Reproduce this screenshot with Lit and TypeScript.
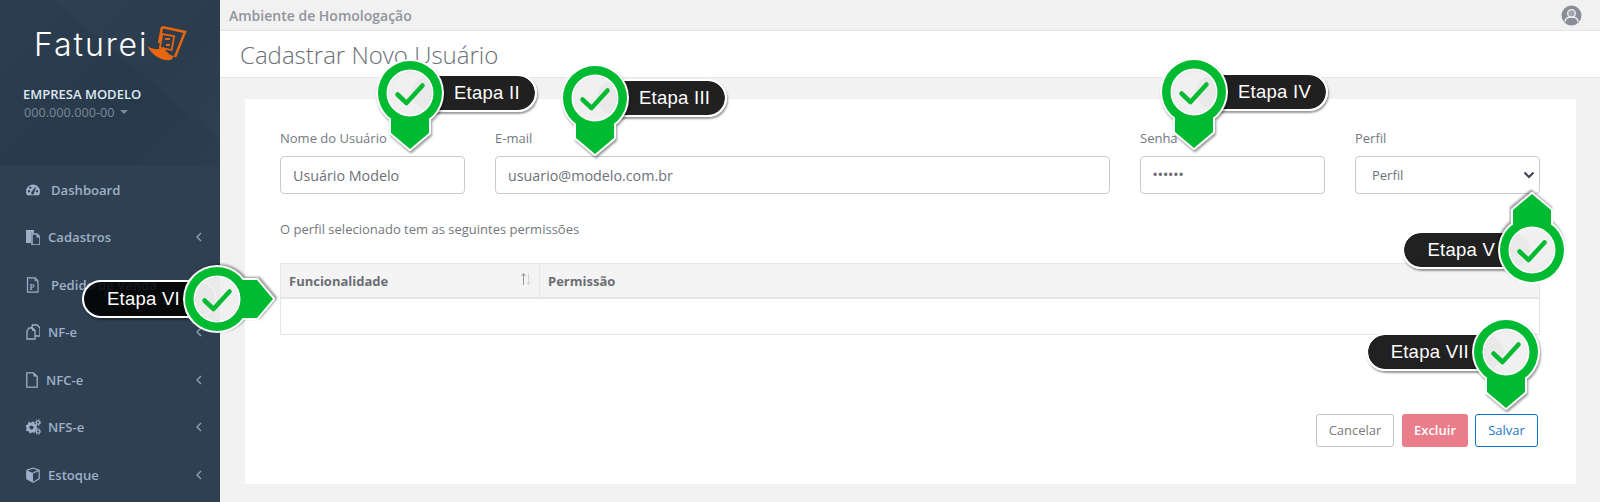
import { LitElement, html, css, svg } from 'lit';
import { customElement, property } from 'lit/decorators.js';

const chevron = html`<svg class="chev" width="6" height="10" viewBox="0 0 6 10"><path d="M5 1 1 5l4 4" fill="none" stroke="currentColor" stroke-width="1.3"/></svg>`;

const icons: Record<string, unknown> = {
  dashboard: svg`<path fill-rule="evenodd" d="M7 2.500a7 7 0 0 0-7 7c0 1.500.4 2.700 1.100 3.800h11.800A7 7 0 0 0 14 9.500a7 7 0 0 0-7-7zM3 10.500a1.200 1.200 0 1 1 0-2.400 1.200 1.200 0 0 1 0 2.400zM4.300 6.800a1.200 1.200 0 1 1 0-2.400 1.200 1.200 0 0 1 0 2.400zM8.100 10.800a1.500 1.500 0 1 1-2.400-1L9 5.200l.9.500zM11 10.500a1.200 1.200 0 1 1 0-2.400 1.200 1.200 0 0 1 0 2.400z"/>`,
  files: svg`<path d="M0 1h8v3H5v10H0z"/><path d="M6 5h5l3 3v8H6z" fill="none" stroke="currentColor" stroke-width="1.500"/><path d="M10.500 5v3.500H14" fill="currentColor"/>`,
  pedido: svg`<path d="M1.500 .8h7.500l3 3v11.400H1.500z" fill="none" stroke="currentColor" stroke-width="1.200"/><path d="M9 .8v3h3" fill="none" stroke="currentColor"/><text x="3.500" y="12.500" font-size="8" font-weight="700" font-family="Liberation Serif, serif">P</text>`,
  nfe: svg`<path d="M5.500 4 6.500 1h4.500l3 3v8H9" fill="none" stroke="currentColor" stroke-width="1.300"/><path d="M3 4h3.500L9 6.500V15H1V7z" fill="none" stroke="currentColor" stroke-width="1.300"/><path d="M6.500 4v2.500H9" fill="none" stroke="currentColor"/>`,
  doc: svg`<path d="M.8.8H7.500l3.700 3.700v10.700H.8z" fill="none" stroke="currentColor" stroke-width="1.300"/><path d="M7.500.8v3.700h3.700" fill="currentColor"/>`,
  cogs: svg`<circle cx="5.500" cy="8.500" r="3.600" fill="none" stroke="currentColor" stroke-width="3"/><circle cx="5.500" cy="8.500" r="5.200" fill="none" stroke="currentColor" stroke-width="1.600" stroke-dasharray="2 2.080"/><circle cx="12" cy="3.500" r="1.700" fill="none" stroke="currentColor" stroke-width="1.300"/><circle cx="12" cy="3.500" r="2.900" fill="none" stroke="currentColor" stroke-width="1" stroke-dasharray="1.300 1.430"/><circle cx="12" cy="12.500" r="1.700" fill="none" stroke="currentColor" stroke-width="1.300"/><circle cx="12" cy="12.500" r="2.900" fill="none" stroke="currentColor" stroke-width="1" stroke-dasharray="1.300 1.430"/>`,
  cube: svg`<path d="M7 1 .8 3.400v8.400L7 15.200l6.200-3.400V3.400z" fill="none" stroke="currentColor" stroke-width="1.200" stroke-linejoin="round"/><path d="M.8 3.400 7 6v9.200l-6.200-3.400z"/><path d="M7 6l6.200-2.600" fill="none" stroke="currentColor" stroke-width="1.200"/>`,
};

const menu = [
  { label: 'Dashboard', icon: 'dashboard', w: 14, gap: 11, chev: false },
  { label: 'Cadastros', icon: 'files', w: 14, gap: 8, chev: true },
  { label: 'Pedido de Venda', icon: 'pedido', w: 13, gap: 12, chev: true },
  { label: 'NF-e', icon: 'nfe', w: 14, gap: 8, chev: true },
  { label: 'NFC-e', icon: 'doc', w: 12, gap: 8, chev: true },
  { label: 'NFS-e', icon: 'cogs', w: 15, gap: 7, chev: true },
  { label: 'Estoque', icon: 'cube', w: 14, gap: 8, chev: true },
];

const ring = (o: number, i: number) =>
  `M${-o} 0a${o} ${o} 0 1 0 ${o * 2} 0a${o} ${o} 0 1 0 ${-o * 2} 0zM${-i} 0a${i} ${i} 0 1 1 ${i * 2} 0a${i} ${i} 0 1 1 ${-i * 2} 0z`;

@customElement('step-marker')
export class StepMarker extends LitElement {
  @property() label = '';
  @property() dir: 'down' | 'up' | 'right' = 'down';
  @property() side: 'left' | 'right' = 'right';
  @property({ type: Number }) x = 0;
  @property({ type: Number }) y = 0;

  static styles = css`
    :host { position: absolute; display: block; width: 0; height: 0; z-index: 5; }
    .pill {
      position: absolute;
      top: -19px;
      height: 38px;
      box-sizing: border-box;
      display: flex;
      align-items: center;
      background: rgba(0, 0, 0, .87);
      background-clip: padding-box;
      border: 2px solid #fff;
      border-radius: 19px;
      color: #fff;
      font: 18.500px "Liberation Sans", Arial, sans-serif;
      letter-spacing: .25px;
      white-space: nowrap;
      box-shadow: 1px 2px 2px rgba(0, 0, 0, .4);
    }
    .pill.right { left: 0; padding: 0 15px 0 42px; }
    .pill.left { right: 0; padding: 0 35px 0 23px; }
    svg { position: absolute; left: -70px; top: -70px; overflow: visible; }
    .pin { filter: drop-shadow(1px 2px 1px rgba(0, 0, 0, .4)); }
  `;

  render() {
    const rot = { down: 0, up: 180, right: -90 }[this.dir];
    const tip = 'M-19 25V40L0 56 19 40V25z';
    this.style.left = `${this.x}px`;
    this.style.top = `${this.y}px`;
    return html`
      <div class="pill ${this.side}">${this.label}</div>
      <svg width="140" height="140" viewBox="-70 -70 140 140">
        <g class="pin" transform="rotate(${rot})">
          <path d="${ring(34, 21.500)}" fill="#fff" fill-rule="evenodd"/>
          <path d="${tip}" fill="#fff" stroke="#fff" stroke-width="4" stroke-linejoin="round"/>
          <path d="${ring(32, 23.500)}" fill="#00bb31" fill-rule="evenodd"/>
          <path d="${tip}" fill="#00bb31"/>
        </g>
        <circle r="22" fill="#f0f0f0" fill-opacity=".97"/>
        <path d="M-12.500 1.500-3.500 10 12.500-7.500" fill="none" stroke="#00bb31" stroke-width="4.500" stroke-linecap="round" stroke-linejoin="round"/>
      </svg>
    `;
  }
}

@customElement('app-root')
export class AppRoot extends LitElement {
  static styles = css`
    :host {
      display: block;
      position: relative;
      height: 502px;
      overflow: hidden;
      font-family: "Open Sans", sans-serif;
      color: #6d7178;
      background: #f2f2f2;
    }
    .layout { display: flex; height: 502px; }
    .side { width: 220px; flex: none; background: #2f4052; display: flex; flex-direction: column; }
    .brand {
      height: 166px;
      box-sizing: border-box;
      padding: 26px 0 0 34px;
      background:
        linear-gradient(40deg, transparent 60%, rgba(255, 255, 255, .015) 60%),
        linear-gradient(135deg, #2c3e4f 0%, #27394a 60%, #2b3e50 100%);
      border-bottom: 1px solid #2c3d4e;
    }
    .logo { display: flex; align-items: center; height: 36px; }
    .logo span {
      font: 300 32px Inter, sans-serif;
      color: #fff;
      letter-spacing: 1.900px;
    }
    .logo svg { margin-left: -1px; }
    .company { margin: 24px 0 0 -11px; color: #dfe9f2; font-size: 13px; font-weight: 600; line-height: 16px; }
    .doc { margin: 2px 0 0 -10px; color: #7a8997; font-size: 12.700px; line-height: 16px; display: flex; align-items: center; gap: 5px; }
    .caret { width: 0; height: 0; border: 4px solid transparent; border-top-color: #7a8997; border-bottom: 0; }
    nav { display: flex; flex-direction: column; }
    .item {
      height: 47.500px;
      display: flex;
      align-items: center;
      padding-left: 26px;
      color: #9db0c8;
      font-size: 13.100px;
      font-weight: 600;
    }
    .item svg.ico { fill: currentColor; flex: none; }
    .chev { margin-left: auto; margin-right: 18px; color: #8ea3bd; }

    main { flex: 1; display: flex; flex-direction: column; min-width: 0; }
    .env {
      height: 30px;
      flex: none;
      display: flex;
      align-items: center;
      justify-content: space-between;
      padding: 0 18px 0 9px;
      background: #f1f1f1;
      border-bottom: 1px solid #e4e4e4;
      color: #90949c;
      font-size: 14px;
      font-weight: 600;
    }
    .title {
      height: 47px;
      flex: none;
      box-sizing: border-box;
      padding-left: 20px;
      display: flex;
      align-items: center;
      background: #fff;
      border-bottom: 1px solid #e6e6e6;
      color: #6b6f76;
      font-size: 24px;
      font-weight: 300;
    }
    .card {
      margin: 21px 24px 0 25px;
      height: 385px;
      box-sizing: border-box;
      padding: 31px 36px 0 35px;
      background: #fff;
      display: flex;
      flex-direction: column;
    }
    .fields { display: grid; grid-template-columns: 185px 615px 185px 185px; column-gap: 30px; }
    label { display: block; font-size: 13px; line-height: 17px; color: #74787e; margin-bottom: 9px; }
    .input {
      height: 38px;
      box-sizing: border-box;
      border: 1px solid #c9cbd3;
      border-radius: 4px;
      display: flex;
      align-items: center;
      padding: 0 12px;
      font-size: 14.300px;
      color: #6d7178;
    }
    .select { padding-left: 16px; font-size: 13px; justify-content: space-between; padding-right: 4px; }
    .input.dots { letter-spacing: 1px; font-family: "Liberation Sans", sans-serif; font-size: 12px; }
    .note { margin: 27px 0 0; font-size: 13px; line-height: 17px; color: #74787e; }
    table { margin-top: 25px; width: 1260px; border-collapse: collapse; table-layout: fixed; border: 1px solid #e6e6e6; }
    th {
      height: 34px;
      padding: 1px 8px 0;
      box-sizing: border-box;
      background: #f4f4f4;
      border-bottom: 2px solid #e6e6e6;
      border-right: 1px solid #e6e6e6;
      color: #6a6e74;
      font-size: 13px;
      font-weight: 700;
      text-align: left;
      position: relative;
    }
    td { height: 35px; padding: 0; }
    .sort { position: absolute; right: 7px; top: 8px; }
    .actions { margin-top: 79px; display: flex; justify-content: flex-end; gap: 7px; padding-right: 2px; }
    .btn {
      height: 33px;
      box-sizing: border-box;
      border-radius: 3px;
      display: flex;
      align-items: center;
      justify-content: center;
      font-size: 13px;
    }
    .cancel { width: 78px; border: 1px solid #c4c4c4; color: #7a7a7a; margin-right: 1px; }
    .del { width: 66px; background: #e97d89; color: #fff; font-weight: 600; }
    .save { width: 63px; border: 1px solid #0b72c4; color: #1978c8; }
  `;

  render() {
    return html`
      <div class="layout">
        <aside class="side">
          <div class="brand">
            <div class="logo">
              <span>Faturei</span>
              <svg width="40" height="36" viewBox="0 0 40 36">
                <path d="M0 20C6 24 12 24 17 21 19 26 22 29 27 30L24 34C14 35 6 30 0 20z" fill="#e8660e"/>
                <path d="M15 1 38 6 28 31M15 1 12 17" fill="none" stroke="#e8660e" stroke-width="2.500"/>
                <rect x="14" y="9" width="12" height="14" fill="none" stroke="#e8660e" stroke-width="1.800" transform="rotate(10 20 16)"/>
                <path d="M18 12h5v2h-5zM19 18h4v2h-4z" fill="#e8660e"/>
              </svg>
            </div>
            <div class="company">EMPRESA MODELO</div>
            <div class="doc">000.000.000-00 <i class="caret"></i></div>
          </div>
          <nav>
            ${menu.map(
              (m) => html`<div class="item">
                <svg class="ico" width=${m.w} height="16" viewBox="0 0 ${m.w} 16" style="margin-right:${m.gap}px">${icons[m.icon]}</svg>
                <span>${m.label}</span>
                ${m.chev ? chevron : ''}
              </div>`
            )}
          </nav>
        </aside>
        <main>
          <div class="env">
            <span>Ambiente de Homologação</span>
            <svg width="21" height="21" viewBox="0 0 21 21">
              <circle cx="10.500" cy="10.500" r="10" fill="#8a8d99"/>
              <circle cx="10.500" cy="8.500" r="3.800" fill="#a3a5af" stroke="#eeeeee" stroke-width="1.300"/>
              <path d="M4 17c0-3.500 3-5 6.500-5s6.500 1.500 6.500 5" fill="none" stroke="#eeeeee" stroke-width="1.300"/>
            </svg>
          </div>
          <div class="title">Cadastrar Novo Usuário</div>
          <section class="card">
            <div class="fields">
              <div><label>Nome do Usuário</label><div class="input">Usuário Modelo</div></div>
              <div><label>E-mail</label><div class="input">usuario@modelo.com.br</div></div>
              <div><label>Senha</label><div class="input dots">••••••</div></div>
              <div>
                <label>Perfil</label>
                <div class="input select">
                  <span>Perfil</span>
                  <svg width="12" height="8" viewBox="0 0 12 8"><path d="M1.500 1.500 6 6l4.500-4.500" fill="none" stroke="#3d4350" stroke-width="2"/></svg>
                </div>
              </div>
            </div>
            <p class="note">O perfil selecionado tem as seguintes permissões</p>
            <table>
              <colgroup><col style="width:259px" /><col /></colgroup>
              <thead>
                <tr>
                  <th>Funcionalidade
                    <svg class="sort" width="12" height="14" viewBox="0 0 12 14">
                      <path d="M3.500 13V2M1.500 4l2-2.500 2 2.500" fill="none" stroke="#9a9a9a"/>
                      <path d="M8.500 1v11M6.500 10l2 2.500 2-2.500" fill="none" stroke="#d5d5d5"/>
                    </svg>
                  </th>
                  <th>Permissão</th>
                </tr>
              </thead>
              <tbody><tr><td colspan="2"></td></tr></tbody>
            </table>
            <div class="actions">
              <div class="btn cancel">Cancelar</div>
              <div class="btn del">Excluir</div>
              <div class="btn save">Salvar</div>
            </div>
          </section>
        </main>
      </div>
      <step-marker label="Etapa II" dir="down" side="right" .x=${410} .y=${93}></step-marker>
      <step-marker label="Etapa III" dir="down" side="right" .x=${595} .y=${98}></step-marker>
      <step-marker label="Etapa IV" dir="down" side="right" .x=${1194} .y=${92}></step-marker>
      <step-marker label="Etapa V" dir="up" side="left" .x=${1532} .y=${250}></step-marker>
      <step-marker label="Etapa VI" dir="right" side="left" .x=${217} .y=${299}></step-marker>
      <step-marker label="Etapa VII" dir="down" side="left" .x=${1506} .y=${352}></step-marker>
    `;
  }
}
